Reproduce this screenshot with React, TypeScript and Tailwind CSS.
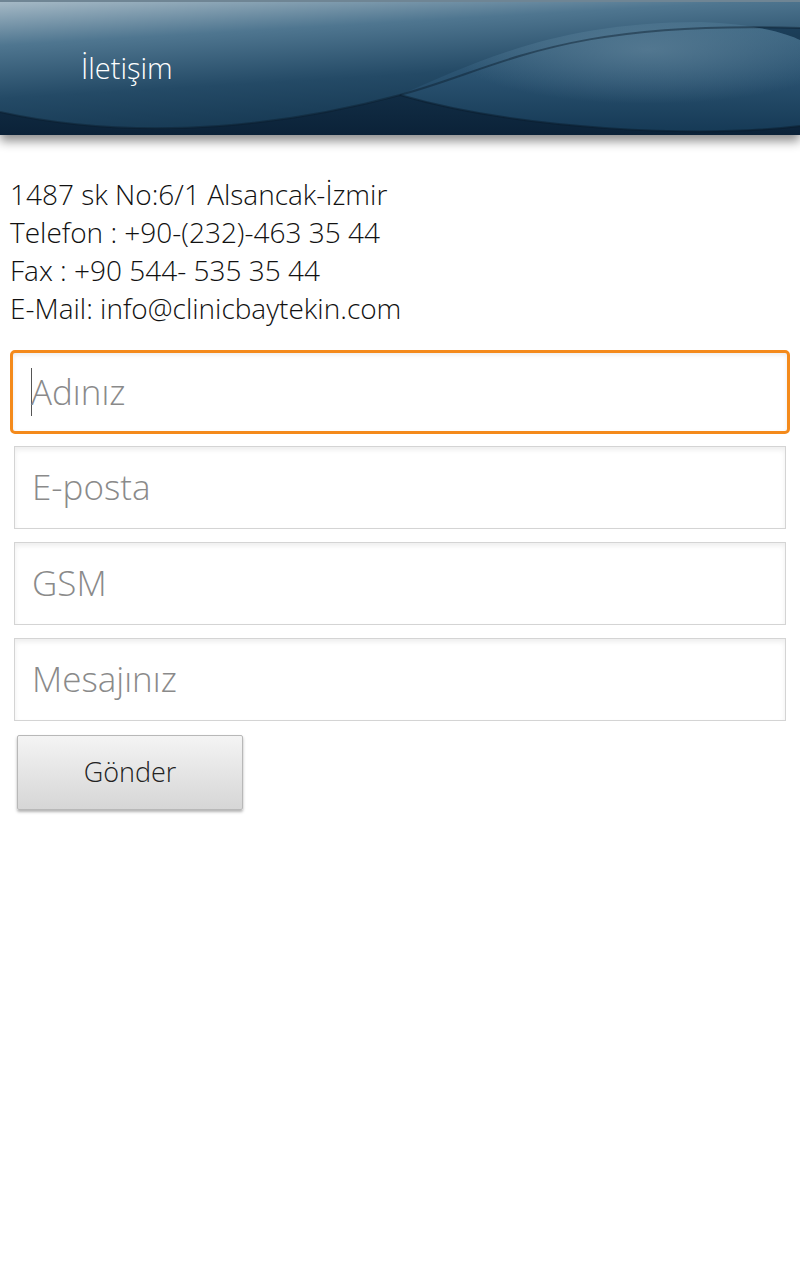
import React from "react";

const font = { fontFamily: '"Open Sans", "Noto Sans", sans-serif' };

function HeaderWaves() {
  return (
    <svg className="absolute inset-0 h-full w-full" viewBox="0 0 800 135" preserveAspectRatio="none">
      <defs>
        <linearGradient id="base" x1="0" y1="0" x2="0.35" y2="1">
          <stop offset="0" stopColor="#a9bcc8" />
          <stop offset="0.3" stopColor="#4f7690" />
          <stop offset="0.65" stopColor="#244a66" />
          <stop offset="1" stopColor="#143650" />
        </linearGradient>
        <linearGradient id="right" x1="0" y1="0" x2="0" y2="1">
          <stop offset="0" stopColor="#3f6985" />
          <stop offset="0.5" stopColor="#2a5270" />
          <stop offset="1" stopColor="#163a56" />
        </linearGradient>
        <linearGradient id="bottom" x1="0" y1="0" x2="0" y2="1">
          <stop offset="0" stopColor="#1c3f5a" />
          <stop offset="1" stopColor="#0b2238" />
        </linearGradient>
        <radialGradient id="glow" cx="0.62" cy="0.25" r="0.5">
          <stop offset="0" stopColor="#5f8299" stopOpacity="0.7" />
          <stop offset="1" stopColor="#5f8299" stopOpacity="0" />
        </radialGradient>
      </defs>
      <rect width="800" height="135" fill="url(#base)" />
      <path d="M0 112 C 150 145, 300 122, 400 95 C 500 68, 560 20, 800 28 L800 135 L0 135 Z" fill="url(#bottom)" />
      <path d="M400 95 C 480 60, 560 22, 700 22 C 760 24, 790 35, 800 40 L800 126 C 700 138, 520 130, 400 95 Z" fill="url(#right)" />
      <path d="M400 95 C 480 60, 560 22, 700 22 C 760 24, 790 35, 800 40 L800 126 C 700 138, 520 130, 400 95 Z" fill="url(#glow)" />
      <path d="M0 112 C 150 145, 300 122, 400 95 C 500 68, 560 20, 800 28" fill="none" stroke="#0a1c2c" strokeOpacity="0.45" strokeWidth="2" />
      <path d="M400 95 C 520 130, 700 138, 800 126" fill="none" stroke="#0a1c2c" strokeOpacity="0.5" strokeWidth="2" />
      <rect width="800" height="2" fill="#6f8594" />
    </svg>
  );
}

function Field({ placeholder, focused }: { placeholder: string; focused?: boolean }) {
  if (focused) {
    return (
      <div className="mx-[10px] flex h-[84px] items-center rounded-[5px] border-[3px] border-[#f48a1b] bg-white px-[18px] shadow-[inset_0_2px_4px_rgba(0,0,0,0.08)]">
        <span className="mr-[-1px] h-[48px] w-[1px] bg-[#555]" />
        <span className="text-[35px] font-light text-[#8a8a8a]" style={font}>
          {placeholder}
        </span>
      </div>
    );
  }
  return (
    <div className="mx-[14px] flex h-[83px] items-center border border-[#d4d4d4] bg-white px-[17px] shadow-[inset_0_3px_5px_rgba(0,0,0,0.07)]">
      <span className="text-[35px] font-light text-[#8a8a8a]" style={font}>
        {placeholder}
      </span>
    </div>
  );
}

export default function App() {
  return (
    <div className="min-h-[1280px] w-[800px] bg-white" style={font}>
      <header className="relative h-[135px] overflow-hidden shadow-[0_6px_10px_rgba(0,0,0,0.45)]">
        <HeaderWaves />
        <h1 className="relative pl-[81px] pt-[48px] text-[29px] font-light leading-[40px] text-white">
          İletişim
        </h1>
      </header>

      <div className="px-[10px] pt-[40px] text-[28px] font-light leading-[38px] text-[#111]">
        <p>1487 sk No:6/1 Alsancak-İzmir</p>
        <p>Telefon : +90-(232)-463 35 44</p>
        <p>Fax : +90 544- 535 35 44</p>
        <p>E-Mail: info@clinicbaytekin.com</p>
      </div>

      <div className="mt-[23px] flex flex-col">
        <Field placeholder="Adınız" focused />
        <div className="mt-[12px] flex flex-col gap-[13px]">
          <Field placeholder="E-posta" />
          <Field placeholder="GSM" />
          <Field placeholder="Mesajınız" />
        </div>
      </div>

      <button
        className="ml-[17px] mt-[14px] h-[75px] w-[226px] rounded-[2px] border border-[#b8b8b8] bg-gradient-to-b from-[#f4f4f4] to-[#d6d6d6] text-[27px] font-light text-[#222] shadow-[0_2px_3px_rgba(0,0,0,0.3)]"
        style={font}
      >
        Gönder
      </button>
    </div>
  );
}
